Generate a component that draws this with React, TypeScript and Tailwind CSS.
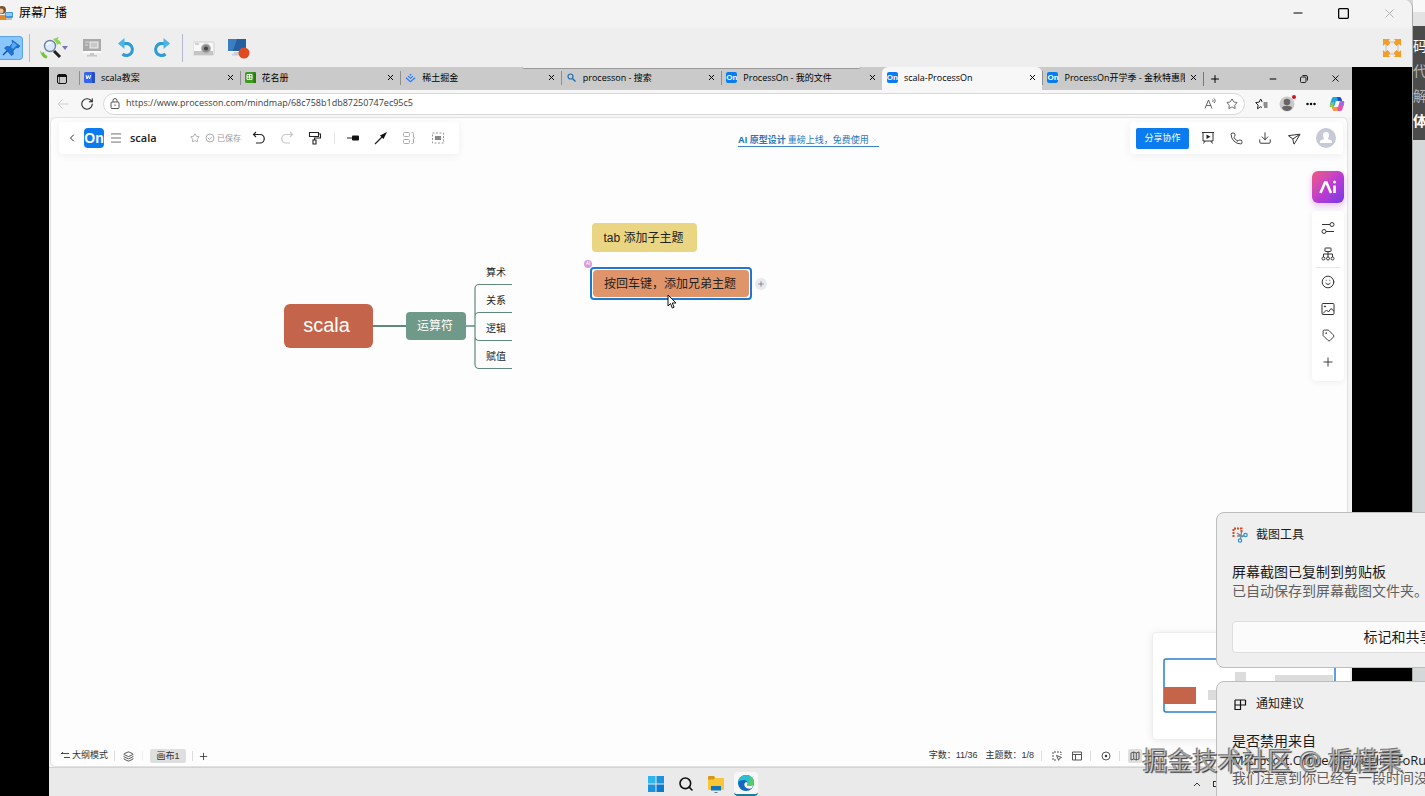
import type { ReactNode } from "react";
import {
  ChevronLeft,
  Download,
  Ellipsis,
  Layers,
  Menu,
  Minus,
  Phone,
  Plus,
  RotateCw,
  Search,
  Send,
  Smile,
  Square,
  Star,
  Tag,
  X,
} from "lucide-react";

type TabItem = {
  title: string;
  icon: ReactNode;
  active?: boolean;
};

function OnLogo({ large }: { large?: boolean }) {
  return large ? (
    <span className="flex h-5 w-5 shrink-0 items-center justify-center rounded bg-[#0a7cf0] font-['Liberation_Sans',sans-serif] text-sm font-bold text-white">
      On
    </span>
  ) : (
    <span className="flex h-[11px] w-[11px] shrink-0 items-center justify-center rounded-xs bg-[#0a7cf0] font-['Liberation_Sans',sans-serif] text-[8px] leading-[11px] font-bold text-white">
      On
    </span>
  );
}

function WordIcon() {
  return (
    <svg viewBox="0 0 11 11" className="h-[11px] w-[11px] shrink-0">
      <rect width="11" height="11" rx="1.5" fill="#3566ea" />
      <path d="M8 0h1.500a1.500 1.500 0 0 1 1.500 1.500V11H8z" fill="#234fc8" />
      <path d="M2 3l1 4 1.300-3.500L5.600 7l1-4" fill="none" stroke="#fff" strokeWidth="1" />
    </svg>
  );
}

function SheetIcon() {
  return (
    <svg viewBox="0 0 11 11" className="h-[11px] w-[11px] shrink-0">
      <rect width="11" height="11" rx="1.5" fill="#3e9b1e" />
      <path d="M8.500 0H9.500A1.500 1.500 0 0 1 11 1.500V11H8.500z" fill="#2b7a12" />
      <path d="M2 2.500h5v5H2zM4.500 2.500v5M2 5h5" fill="none" stroke="#fff" />
    </svg>
  );
}

function JuejinIcon() {
  return (
    <svg viewBox="0 0 12 12" className="h-[11px] w-[11px] shrink-0" fill="none" stroke="#2f7df0" strokeWidth="1.300">
      <path d="M6 2l1.300 1.100L6 4.200 4.700 3.100z" fill="#2f7df0" stroke="none" />
      <path d="M3.300 4.500L6 6.700l2.700-2.200M1 6.300l5 4.200 5-4.200" />
    </svg>
  );
}

function SearchIcon() {
  return (
    <svg viewBox="0 0 11 11" className="h-[11px] w-[11px] shrink-0" fill="none" stroke="#1f6fb5">
      <circle cx="4.500" cy="4.500" r="2.500" strokeWidth="1.200" />
      <path d="M6.500 6.500l3 3" strokeWidth="1.500" />
    </svg>
  );
}

const tabs: TabItem[] = [
  { title: "scala教案", icon: <WordIcon /> },
  { title: "花名册", icon: <SheetIcon /> },
  { title: "稀土掘金", icon: <JuejinIcon /> },
  { title: "processon - 搜索", icon: <SearchIcon /> },
  { title: "ProcessOn - 我的文件", icon: <OnLogo /> },
  { title: "scala-ProcessOn", icon: <OnLogo />, active: true },
  { title: "ProcessOn开学季 - 金秋特惠限时", icon: <OnLogo /> },
];

function TitleBar() {
  return (
    <header className="flex h-7 shrink-0 items-center bg-[#f3f3f3] pb-0.5">
      <svg viewBox="0 0 14 16" className="h-4 w-[14px]">
        <circle cx="2" cy="5" r="4" fill="#7c5130" />
        <circle cx="1" cy="6" r="2.500" fill="#e9c39a" />
        <path d="M0 10h5l2 5H0z" fill="#e08a2c" />
        <rect x="5" y="7" width="8" height="6" rx="1" fill="#3e96dc" />
        <rect x="6" y="8" width="6" height="3" fill="#8fcaf4" />
        <path d="M7 14h5" stroke="#7e8c98" />
      </svg>
      <h1 className="ml-[5px] flex-1 text-xs text-black">屏幕广播</h1>
      <div className="flex items-center gap-8 pr-[15px]">
        <button aria-label="最小化">
          <Minus className="h-[14px] w-[14px]" strokeWidth={1.8} />
        </button>
        <button aria-label="最大化">
          <Square className="h-[13px] w-[13px]" strokeWidth={2.4} />
        </button>
        <button aria-label="关闭" className="text-[#b5b5b5]">
          <X className="h-[15px] w-[15px]" strokeWidth={1.6} />
        </button>
      </div>
    </header>
  );
}

function Toolbar() {
  return (
    <div className="relative flex h-[39px] shrink-0 items-center bg-[#eeeeee]">
      <button aria-label="固定" className="h-6 w-[23px] rounded-r border border-l-0 border-[#5aa5e8] bg-[#8ac6fb]">
        <svg viewBox="0 0 22 22" className="h-[22px] w-[22px]">
          <path d="M3 18l6-6" stroke="#164f93" strokeWidth="1.500" />
          <path d="M12 3l8 6-2 2-2-.500-3 3.500.500 3-2 1.500-7-7.500 2-1.500 3 .300 3-3.500z" fill="#1e73d6" stroke="#0f55a8" strokeWidth=".600" />
          <path d="M13 5l4 3-4 4-2-2z" fill="#5aa9f4" />
        </svg>
      </button>
      <span className="ml-1.5 h-7 w-px bg-[#b5b9d8]" />
      <button aria-label="缩放" className="ml-2.5 flex items-center">
        <svg viewBox="0 0 22 22" className="h-[22px] w-[22px]">
          <path d="M0 14c1 0 1.500 1 1.500 2L4 15c0 2 1.500 3 3.500 4l-1 2.500C3 21 1 18 0 14z" fill="#74c43c" />
          <path d="M13 2l6-2-1.500 2.500C20 4 21 5 21 8l-2-1.500L17 8c0-2-1-3-4-6z" fill="#8bd24e" />
          <path d="M14 14l6 6" stroke="#222" strokeWidth="3" />
          <circle cx="10" cy="9" r="5.500" fill="#dbeafa" stroke="#71839f" strokeWidth="1.400" />
          <path d="M7 8a3 3 0 0 1 4-2" fill="none" stroke="#fff" strokeWidth="1.200" />
        </svg>
        <svg viewBox="0 0 6 4" className="h-1 w-1.5">
          <path d="M0 0h6L3 4z" fill="#7779b8" />
        </svg>
      </button>
      <button aria-label="屏幕" className="ml-[14px]">
        <svg viewBox="0 0 20 20" className="h-5 w-5">
          <rect x="1" y="1" width="18" height="12" fill="#a9a9a9" />
          <rect x="8" y="4" width="8" height="6" fill="#c9c9c9" stroke="#efefef" />
          <path d="M3 4h4M3 7h3" stroke="#dcdcdc" />
          <path d="M1 14h18" stroke="#fff" strokeWidth="1.500" />
          <path d="M8 15h4v2h3v1.500H5V17h3z" fill="#c6c6c6" />
        </svg>
      </button>
      <button aria-label="撤销" className="ml-[15px]">
        <svg viewBox="0 0 20 20" className="h-5 w-5" fill="none">
          <path d="M5 5.500h5a6 6 0 1 1-4.500 10.500" stroke="#2e9bd6" strokeWidth="3" />
          <path d="M7.500 0v11L1 5.500z" fill="#4db5e6" />
        </svg>
      </button>
      <button aria-label="重做" className="ml-[14px]">
        <svg viewBox="0 0 20 20" className="h-5 w-5" fill="none">
          <path d="M15 5.500h-5a6 6 0 1 0 4.500 10.500" stroke="#2e9bd6" strokeWidth="3" />
          <path d="M12.500 0v11L19 5.500z" fill="#4db5e6" />
        </svg>
      </button>
      <span className="ml-[11px] h-7 w-px bg-[#b5b9d8]" />
      <button aria-label="截图" className="ml-2.5">
        <svg viewBox="0 0 22 18" className="h-[18px] w-[22px]">
          <rect y="3" width="21" height="13" rx="1" fill="#f8f8f8" stroke="#cfcfcf" />
          <path d="M1 12h19v4H1z" fill="#c4c4c4" />
          <rect x="2" y="4" width="4" height="2" fill="#d0d0d0" />
          <circle cx="13" cy="9.500" r="4.500" fill="#8e8e8e" stroke="#bbb" />
          <circle cx="13" cy="9.500" r="2" fill="#3f464c" />
        </svg>
      </button>
      <button aria-label="录制" className="ml-3">
        <svg viewBox="0 0 24 22" className="h-[22px] w-6">
          <rect x="1" y="2" width="18" height="12" fill="#245f9f" />
          <path d="M1 2h9L6 14H1z" fill="#3a7ec2" />
          <path d="M1 14.500h18" stroke="#fff" />
          <path d="M7 15h5v2h3v1.500H5V17h2z" fill="#c9d0d6" />
          <circle cx="17" cy="16" r="5.500" fill="#e04a22" />
        </svg>
      </button>
      <div className="flex-1" />
      <button aria-label="全屏" className="mr-[11px]">
        <svg viewBox="0 0 18 18" className="h-[18px] w-[18px]">
          <path d="M5 3h8M5 15h8M3 5v8M15 5v8" stroke="#b9c4cb" />
          <path d="M0 0h7L5.500 2l2 2-3 3-2.500-2L0 7zM18 0h-7l1.500 2-2 2 3 3L16 5l2 2zM0 18h7l-1.500-2 2-2-3-3L2 13l-2-2zM18 18h-7l1.500-2-2-2 3-3 2.500 2 2-2z" fill="#f59d22" />
        </svg>
      </button>
      {/* Edge of the auto-hidden broadcast panel */}
      <span className="absolute -bottom-0.5 left-[37%] h-[3px] w-[24%] rounded-b border-b border-[#999] bg-[#eeeeee]" />
    </div>
  );
}

function TabStrip() {
  return (
    <div className="flex h-[23px] shrink-0 items-center bg-[#c9cac9]">
      <button aria-label="标签页操作" className="flex w-[30px] shrink-0 justify-center pr-1">
        <svg viewBox="0 0 12 12" className="h-3 w-3" fill="none" stroke="#111">
          <rect x="1.500" y="1.500" width="9" height="9" rx="1.500" />
          <path d="M1.500 3h9" strokeWidth="2" />
          <path d="M3.500 3v7.500" strokeWidth=".600" />
        </svg>
      </button>
      <nav className="flex h-full min-w-0 flex-1">
        {tabs.map((tab) => (
          <div
            key={tab.title}
            className={
              tab.active
                ? "flex min-w-0 flex-1 items-center rounded-t-md bg-[#f7f7f7] pr-[5px] pb-0.5"
                : "flex min-w-0 flex-1 items-center pr-[5px] pb-0.5"
            }
          >
            <span className={tab.active ? "mr-1 w-px shrink-0" : "mr-1 h-3.5 w-px shrink-0 bg-[#8f8f8f]"} />
            {tab.icon}
            <a href="#" className="mr-1 ml-1.5 min-w-0 flex-1 overflow-hidden text-[9px] leading-4 whitespace-nowrap text-black">
              {tab.title}
            </a>
            <button aria-label="关闭标签页">
              <X className="h-[9px] w-[9px]" strokeWidth={2.6} />
            </button>
          </div>
        ))}
      </nav>
      <div className="flex w-[149px] shrink-0 items-center">
        <span className="h-3.5 w-px bg-[#777]" />
        <button aria-label="新标签页" className="ml-[5px]">
          <Plus className="h-3 w-3" strokeWidth={2} />
        </button>
        <div className="flex flex-1 items-center justify-end gap-[21px] pr-[11px]">
          <button aria-label="最小化窗口">
            <Minus className="h-2.5 w-2.5" strokeWidth={2.4} />
          </button>
          <button aria-label="还原窗口">
            <svg viewBox="0 0 10 10" className="h-2.5 w-2.5" fill="none" stroke="#222">
              <rect x="1.500" y="3" width="5.500" height="5.500" rx="1" />
              <path d="M3.500 1.500h3.500a1.500 1.500 0 0 1 1.500 1.500v3.500" />
            </svg>
          </button>
          <button aria-label="关闭窗口">
            <X className="h-[11px] w-[11px]" strokeWidth={2} />
          </button>
        </div>
      </div>
    </div>
  );
}

function AddressBar() {
  return (
    <div className="flex h-[27px] shrink-0 items-center bg-[#f7f7f7] pr-[7px] pl-2">
      <button aria-label="后退" className="text-[#cfcfcf]">
        <svg viewBox="0 0 12 12" className="h-3 w-3" fill="none" stroke="currentColor">
          <path d="M11.500 6H1M5.500 1.500L1 6l4.500 4.500" />
        </svg>
      </button>
      <button aria-label="刷新" className="ml-[11px]">
        <RotateCw className="h-3.5 w-3.5 text-[#222]" strokeWidth={1.8} />
      </button>
      <div className="ml-[9px] flex h-[22px] min-w-0 flex-1 items-center rounded-full border border-[#d9d9d9] bg-white px-1.5">
        <svg viewBox="0 0 10 12" className="h-3 w-2.5" fill="none" stroke="#555">
          <rect x="1" y="4" width="8" height="6.500" rx="1" />
          <path d="M3 4V2.500a2 2 0 0 1 4 0V4M5 6.500v1.500" />
        </svg>
        <label htmlFor="address" className="sr-only">
          地址
        </label>
        <input
          id="address"
          defaultValue="https://www.processon.com/mindmap/68c758b1db87250747ec95c5"
          className="ml-1.5 h-5 min-w-0 flex-1 bg-transparent pb-0.5 text-[9px] text-[#3c3c3c] outline-none"
        />
        <button aria-label="朗读此页" className="text-[#555]">
          <svg viewBox="0 0 13 12" className="h-3 w-[13px]" fill="none" stroke="currentColor">
            <path d="M1 10.500L4.500 2 8 10.500M2.200 7.500h4.600M8.500 1.500c.800.700.800 1.800 0 2.500M10 .500c1.500 1.500 1.500 3 0 4.500" strokeWidth=".900" />
          </svg>
        </button>
        <button aria-label="收藏" className="ml-[9px] text-[#555]">
          <Star className="h-3 w-3" strokeWidth={1.8} />
        </button>
      </div>
      <button aria-label="收藏夹" className="ml-2.5">
        <svg viewBox="0 0 14 12" className="h-3 w-3.5" fill="none" stroke="#222">
          <path d="M7 9.500L5.500 8.700 2.500 10.800l.600-3.700L.700 4.600l3.500-.500L5.700 1l1.500 3M8.500 5h4M8.500 7h4M9 9h3.500" />
        </svg>
      </button>
      <button aria-label="个人资料" className="relative ml-2.5">
        <svg viewBox="0 0 16 16" className="h-4 w-4">
          <circle cx="8" cy="8" r="7.500" fill="#c9c9c9" />
          <circle cx="8" cy="6" r="3.300" fill="#666" />
          <path d="M3 12c0-3 10-3 10 0-2 4-8 4-10 0z" fill="#666" />
        </svg>
        <span className="absolute -top-px -right-px h-1 w-1 rounded-full bg-[#d3131d]" />
      </button>
      <button aria-label="更多" className="ml-2.5">
        <Ellipsis className="h-3 w-3" strokeWidth={3} />
      </button>
      <button aria-label="Copilot" className="ml-3">
        <svg viewBox="0 0 16 16" className="h-4 w-4">
          <path d="M5 1h5c2 0 2.500 2 3 4H7c-1 2-1 5-3 6H2C0 11 1 8 2 5s1-4 3-4z" fill="#24a4dc" />
          <path d="M8 1h2c2 0 2.500 2 3 4H9z" fill="#2349c5" />
          <path d="M2 7l3-1-1 5H2C0 11 1 9 2 7z" fill="#9ac839" />
          <path d="M11 15H6c-2 0-2.500-2-3-4h6c1-2 1-6 3-6h2c2 0 1 3 0 6s-1 4-3 4z" fill="#e653a4" />
          <path d="M12 5h2c2 0 1 3 .300 5H10z" fill="#a566e8" />
          <path d="M6 15c-2 0-2.500-2-3-4h5l1 4z" fill="#f69a3d" />
        </svg>
      </button>
    </div>
  );
}

function EditorHeader() {
  return (
    <div className="flex items-center pt-1 pr-1 pl-2">
      <div className="flex h-8 w-[400px] shrink-0 items-center rounded bg-white pl-[7px] text-[#333] shadow-[0_2px_8px_rgba(0,0,0,0.06)]">
        <button aria-label="返回">
          <ChevronLeft className="h-3 w-3" strokeWidth={2} />
        </button>
        <span className="ml-1.5">
          <OnLogo large />
        </span>
        <button aria-label="菜单" className="ml-[5px]">
          <Menu className="h-3.5 w-3.5" strokeWidth={1.2} />
        </button>
        <h2 className="ml-[7px] w-[60px] text-[11px] font-semibold text-[#222]">scala</h2>
        <Star className="h-2.5 w-2.5 text-[#999]" strokeWidth={1.8} />
        <svg viewBox="0 0 10 10" className="ml-[5px] h-2.5 w-2.5" fill="none" stroke="#a3a3a3">
          <circle cx="5" cy="5" r="4" strokeWidth=".900" />
          <path d="M3 5l1.500 1.500L7 3.800" strokeWidth=".900" />
        </svg>
        <span className="ml-0.5 text-[8px] text-[#999]">已保存</span>
        <button aria-label="撤销操作" className="ml-[11px]">
          <svg viewBox="0 0 14 14" className="h-3.5 w-3.5" fill="none" stroke="#222" strokeWidth="1.200">
            <path d="M4 1L1.500 3.500 4 6M1.500 3.500H8a4 4 0 0 1 0 8.500H4" />
          </svg>
        </button>
        <button aria-label="重做操作" className="ml-3.5">
          <svg viewBox="0 0 14 14" className="h-3.5 w-3.5" fill="none" stroke="#c7c7c7" strokeWidth="1.200">
            <path d="M10 1l2.500 2.500L10 6M12.500 3.500H6a4 4 0 0 0 0 8.500h4" />
          </svg>
        </button>
        <button aria-label="格式刷" className="ml-3.5">
          <svg viewBox="0 0 14 14" className="h-3.5 w-3.5" fill="none" stroke="#222" strokeWidth="1.100">
            <path d="M1.500 1.500h9v4h-9zM10.500 3h2v4H6.500v2" />
            <path d="M5 9h3v4H5z" />
          </svg>
        </button>
        <span className="ml-3 h-3 w-px bg-[#e5e5e5]" />
        <button aria-label="子主题" className="ml-3">
          <svg viewBox="0 0 12 12" className="h-3 w-3">
            <path d="M0 6h5" stroke="#222" />
            <rect x="5" y="3.500" width="7" height="5" rx="1" fill="#111" />
          </svg>
        </button>
        <button aria-label="关联线" className="ml-[15px]">
          <svg viewBox="0 0 14 14" className="h-3.5 w-3.5">
            <path d="M1 13L10 4" stroke="#222" strokeWidth="1.200" />
            <path d="M13 1L6 4.500 9.500 8z" fill="#111" />
          </svg>
        </button>
        <button aria-label="概要" className="ml-3.5">
          <svg viewBox="0 0 14 14" className="h-3.5 w-3.5" fill="none" stroke="#a8a8a8">
            <rect x="1.500" y="1.500" width="6" height="4" rx="1" />
            <rect x="1.500" y="8.500" width="6" height="4" rx="1" />
            <path d="M9.500 1.500h1a1 1 0 0 1 1 1V6l1 1-1 1v3.500a1 1 0 0 1-1 1h-1" />
          </svg>
        </button>
        <button aria-label="外框" className="ml-[15px]">
          <svg viewBox="0 0 14 14" className="h-3.5 w-3.5" fill="none" stroke="#999">
            <rect x="1.500" y="2" width="11" height="10" strokeDasharray="2 1.500" />
            <rect x="4" y="5" width="6" height="4" fill="#888" stroke="none" />
          </svg>
        </button>
      </div>

      <div className="flex flex-1 justify-center pl-7">
        <a href="#" className="mt-1 flex items-center border-b border-[#3b85c6] text-[9px] leading-3 text-[#2878bd]">
          <b className="mr-0.5 font-bold">AI 原型设计</b>
          重磅上线，免费使用
          <X className="ml-0.5 h-2 w-2 text-[#ddd]" />
        </a>
      </div>

      <div className="flex h-8 shrink-0 items-center rounded bg-white pr-[7px] pl-1.5 text-[#333] shadow-[0_2px_8px_rgba(0,0,0,0.06)]">
        <button className="h-[21px] w-[53px] rounded-xs bg-[#0a7cf0] text-[9px] text-white">分享协作</button>
        <button aria-label="演示" className="ml-3">
          <svg viewBox="0 0 14 14" className="h-3.5 w-3.5" fill="none" stroke="#333">
            <path d="M1 1.500h12M2 1.500h10v8.500H2zM4 10l-1.500 2.500M10 10l1.500 2.500" />
            <path d="M5.500 3.500l4 2.300-4 2.300z" fill="#222" stroke="none" />
          </svg>
        </button>
        <button aria-label="语音" className="ml-[15px]">
          <Phone className="h-[13px] w-[13px]" strokeWidth={1.7} />
        </button>
        <button aria-label="下载" className="ml-[15px]">
          <Download className="h-3.5 w-3.5" strokeWidth={1.6} />
        </button>
        <button aria-label="发送" className="ml-[15px]">
          <Send className="h-[13px] w-[13px] rotate-12" strokeWidth={1.7} />
        </button>
        <button aria-label="账户" className="ml-4">
          <svg viewBox="0 0 20 20" className="h-5 w-5">
            <circle cx="10" cy="10" r="10" fill="#c5cad6" />
            <path d="M10 4a3 3 0 0 1 3 3c0 2-1 2.500-1 4l4 1.800V15H4v-2.200L8 11c0-1.500-1-2-1-4a3 3 0 0 1 3-3z" fill="#fff" />
          </svg>
        </button>
      </div>
    </div>
  );
}

function SidePanel() {
  return (
    <aside className="mt-[17px] mr-[3px] flex flex-col items-center self-end">
      <button aria-label="AI" className="flex h-8 w-8 items-center justify-center rounded-md bg-linear-to-br from-[#f2557c] via-[#bf3bd0] to-[#7434e4] shadow-[0_3px_6px_rgba(190,70,230,0.35)]">
        <svg viewBox="0 0 18 14" className="h-3.5 w-[18px]" fill="none" stroke="#fff" strokeWidth="2.600">
          <path d="M1.500 13L6 2.500h1.500L12 13M15.500 5.500V13" />
          <circle cx="15.500" cy="2" r="1.500" fill="#fff" stroke="none" />
        </svg>
      </button>
      <div className="mt-2 flex w-8 flex-col items-center rounded bg-white pt-2.5 pb-3 text-[#333] shadow-[0_1px_6px_rgba(0,0,0,0.07)]">
        <button aria-label="样式">
          <svg viewBox="0 0 14 14" className="h-3.5 w-3.5" fill="none" stroke="currentColor">
            <path d="M1 3.500h8M5 10.500h8" />
            <circle cx="11" cy="3.500" r="2" />
            <circle cx="3" cy="10.500" r="2" />
          </svg>
        </button>
        <button aria-label="结构" className="mt-3">
          <svg viewBox="0 0 14 14" className="h-3.5 w-3.5" fill="none" stroke="currentColor">
            <rect x="4" y="1" width="6" height="3.500" rx=".500" />
            <path d="M7 4.500V10M2.500 10V7h9v3" />
            <circle cx="2.500" cy="11.500" r="1.500" />
            <circle cx="7" cy="11.500" r="1.500" />
            <circle cx="11.500" cy="11.500" r="1.500" />
          </svg>
        </button>
        <span className="mt-1.5 h-px w-6 bg-[#e8e8e8]" />
        <button aria-label="图标" className="mt-[7px]">
          <Smile className="h-3.5 w-3.5" strokeWidth={1.7} />
        </button>
        <button aria-label="图片" className="mt-[13px]">
          <svg viewBox="0 0 14 14" className="h-3.5 w-3.5" fill="none" stroke="currentColor">
            <rect x="1" y="1.500" width="12" height="11" rx="1" />
            <circle cx="4" cy="4.500" r=".600" fill="currentColor" />
            <path d="M2 11.500L5.500 8l2 2 2.500-3.500L13 9" />
          </svg>
        </button>
        <button aria-label="标签" className="mt-[13px]">
          <Tag className="h-[13px] w-[13px]" strokeWidth={1.7} />
        </button>
        <button aria-label="添加" className="mt-[13px]">
          <Plus className="h-3.5 w-3.5" strokeWidth={1.6} />
        </button>
      </div>
    </aside>
  );
}

function MindMap() {
  return (
    <div className="font-['Liberation_Sans','Noto_Sans_CJK_SC',sans-serif] text-[#1f1f1f]">
      <svg viewBox="0 0 240 110" className="absolute top-[159px] left-[319px] h-[110px] w-[240px]" fill="none" stroke="#5f8a7b">
        <path d="M0 49h37" strokeWidth="2" />
        <path d="M96 49h9" strokeWidth="1.500" />
        <path d="M142 7.500h-33a4 4 0 0 0-4 4v76a4 4 0 0 0 4 4h33M142 35.500h-33a4 4 0 0 0-4 4v20a4 4 0 0 0 4 4h33" strokeWidth="1.200" />
      </svg>
      <div className="absolute top-[186px] left-[233px] flex h-[44px] w-[89px] items-center justify-center rounded-md bg-[#c4644a] pr-1 pb-0.5 text-xl text-white">
        scala
      </div>
      <div className="absolute top-[194px] left-[355px] flex h-[28px] w-[60px] items-center justify-center rounded bg-[#6f9a8a] pr-0.5 text-xs text-white">
        运算符
      </div>
      <ul className="absolute top-[141px] left-[435px] text-[10px] leading-7">
        <li>算术</li>
        <li>关系</li>
        <li>逻辑</li>
        <li>赋值</li>
      </ul>
      <div className="absolute top-[105px] left-[541px] flex h-[29px] w-[105px] items-center justify-center rounded bg-[#ead582] pr-0.5 text-xs">
        tab 添加子主题
      </div>
      <div className="absolute top-[149px] left-[539px] h-[33px] w-[162px] rounded border-2 border-[#1f78cf] bg-white p-px">
        <div className="flex h-full items-center justify-center rounded bg-[#e0946a] pr-0.5 text-xs">按回车键，添加兄弟主题</div>
      </div>
      <span className="absolute top-[142px] left-[533px] flex h-2 w-2 items-center justify-center rounded-full bg-[#d69bda] text-[5px] text-white">
        AI
      </span>
      <button aria-label="添加主题" className="absolute top-[160px] left-[704px] flex h-3 w-3 items-center justify-center rounded-full bg-[#e8eaec] text-[#777]">
        <Plus className="h-2 w-2" strokeWidth={2.4} />
      </button>
      <svg viewBox="0 0 10 16" className="absolute top-[176px] left-[616px] h-4 w-2.5">
        <path d="M1 1v11l2.500-2.500L5.300 14l1.800-.800L5.300 9H9z" fill="#fff" stroke="#111" />
      </svg>
    </div>
  );
}

function MiniMap() {
  return (
    <div className="absolute -right-1 bottom-[26px] h-[108px] w-[199px] rounded border border-[#eee] bg-white px-2.5 pt-[25px] shadow-[0_1px_8px_rgba(0,0,0,0.08)]">
      <svg viewBox="0 0 173 55" className="h-[55px] w-[173px]">
        <rect x="1" y="1" width="171" height="53" rx="2" fill="none" stroke="#2a7fd0" strokeWidth="1.500" />
        <rect x="1" y="29" width="32" height="17" fill="#c4644a" />
        <path d="M45 32h14v10H45zM72 14h11v10H72zM112 17h58v8h-58zM112 8h39v2h-39z" fill="#dcdcdc" />
      </svg>
    </div>
  );
}

function StatusBar() {
  return (
    <footer className="absolute inset-x-0 bottom-0 flex h-5 items-center pr-1 pl-2.5 font-['Liberation_Sans','Noto_Sans_CJK_SC',sans-serif] text-[9px] text-[#333]">
      <button className="flex items-center gap-0.5">
        <svg viewBox="0 0 9 8" className="h-2 w-[9px]" fill="none" stroke="#333">
          <path d="M0 1.500h8M3 5.500h6M2 0L.500 1.500" strokeWidth=".900" />
        </svg>
        大纲模式
      </button>
      <span className="ml-1.5 h-2.5 w-px bg-[#ddd]" />
      <button aria-label="图层" className="ml-2">
        <Layers className="h-[11px] w-[11px]" strokeWidth={1.8} />
      </button>
      <span className="ml-2 h-2.5 w-px bg-[#eee]" />
      <button className="ml-[7px] h-[14px] w-9 rounded-xs bg-[#dfdfdf] text-[9px] leading-[14px]">画布1</button>
      <span className="ml-1.5 h-2.5 w-px bg-[#ddd]" />
      <button aria-label="新建画布" className="ml-[5px]">
        <Plus className="h-[11px] w-[11px]" strokeWidth={1.8} />
      </button>
      <div className="flex flex-1 items-center justify-end pr-[201px]">
        <span>字数：11/36</span>
        <span className="ml-2">主题数：1/8</span>
        <span className="ml-[7px] h-2.5 w-px bg-[#ddd]" />
        <button aria-label="框选" className="ml-2.5">
          <svg viewBox="0 0 10 10" className="h-2.5 w-2.5" fill="none" stroke="#555">
            <path d="M4 9H1V1h8v3" strokeDasharray="2 1" />
            <path d="M4.500 4.500l5 2-2 .800-.800 2z" />
          </svg>
        </button>
        <button aria-label="布局" className="ml-2.5">
          <svg viewBox="0 0 10 10" className="h-2.5 w-2.5" fill="none" stroke="#555">
            <path d="M.500 1h9v8h-9zM.500 3.500h9M3.500 3.500V9" />
          </svg>
        </button>
        <span className="ml-2 h-2.5 w-px bg-[#ddd]" />
        <button aria-label="定位" className="ml-2.5">
          <svg viewBox="0 0 10 10" className="h-2.5 w-2.5" fill="none" stroke="#444">
            <circle cx="5" cy="5" r="4" strokeWidth=".900" />
            <circle cx="5" cy="5" r="1.200" fill="#333" stroke="none" />
          </svg>
        </button>
        <span className="ml-2 h-2.5 w-px bg-[#ddd]" />
        <button aria-label="导航地图" className="ml-2 flex h-3.5 w-3.5 items-center justify-center rounded-xs bg-[#dedede]">
          <svg viewBox="0 0 10 10" className="h-2.5 w-2.5" fill="none" stroke="#555">
            <path d="M1 2l2.700-1 2.600 1L9 1v7L6.300 9 3.700 8 1 9zM3.700 1v7M6.300 2v7" />
          </svg>
        </button>
      </div>
    </footer>
  );
}

function Taskbar() {
  return (
    <nav className="relative flex h-[29px] shrink-0 items-center justify-center border-t border-[#d2d2d2] bg-[#eaeaea] pt-1 pl-[5px]">
      <button aria-label="开始">
        <svg viewBox="0 0 16 16" className="h-4 w-4">
          <path d="M0 0h7.500v7.500H0z" fill="#2fb4ee" />
          <path d="M8.500 0H16v7.500H8.500zM0 8.500h7.500V16H0z" fill="#1b93de" />
          <path d="M8.500 8.500H16V16H8.500z" fill="#0b7bd0" />
        </svg>
      </button>
      <button aria-label="搜索" className="ml-3.5">
        <Search className="h-4 w-4 text-[#111]" strokeWidth={2.4} />
      </button>
      <button aria-label="文件资源管理器" className="ml-3.5">
        <svg viewBox="0 0 16 18" className="h-[18px] w-4">
          <path d="M0 2.500C0 1.500.500 1 1.500 1H6l1.500 2H15c.600 0 1 .400 1 1v11H0z" fill="#f9c637" />
          <path d="M0 2.500C0 1.500.500 1 1.500 1H6l1 2-1.500 1.500H0z" fill="#d99516" />
          <path d="M3 11h10v4.500H3z" fill="#1276b8" />
          <path d="M6.500 17.500h3" stroke="#777" />
        </svg>
      </button>
      <button aria-label="Edge" className="ml-2.5 flex h-6 w-6 items-center justify-center rounded border-b-2 border-[#1e7c9c] bg-[#f7f7f7]">
        <svg viewBox="0 0 18 18" className="h-[18px] w-[18px]">
          <circle cx="9" cy="9" r="8" fill="#1269bd" />
          <path d="M1 8C1.500 4 5 1 9 1c5 0 8 3.500 8 7 0 3-2.500 4-5 4-1.500 0-2.500-.500-2-1.500C11.500 7.500 9 6 6.500 6 4 6 2 7 1 8z" fill="#2cbfd2" />
          <path d="M12 1.700C15 3 17 5.500 17 8c0 3-2.500 4-5 4-1.500 0-2.500-.500-2-1.500 2-1 3.500-5 2-8.800z" fill="#58cb62" />
          <path d="M10 10.500c-.500 1 .500 1.500 2 1.500 2 0 3.500-.500 4.300-1.600L15 14c-4 2-8.500-.500-7.500-4.500C8 8.500 9.500 8 10.300 8.500c.400.600.200 1.300-.300 2z" fill="#f7f7f7" />
        </svg>
      </button>
      <div className="absolute right-[131px] bottom-2 flex items-center gap-3 text-[#333]">
        <svg viewBox="0 0 8 8" className="h-2 w-2" fill="none" stroke="currentColor">
          <path d="M1 6l3-3 3 3" />
        </svg>
        <span className="h-1.5 w-2 border border-[#333]" />
      </div>
    </nav>
  );
}

function Notifications() {
  return (
    <div className="absolute top-[512px] right-[-164px] flex w-[373px] flex-col gap-[13px] text-[#1b1b1b]">
      <section className="h-[156px] rounded-lg border border-[#bdbdbd] bg-[#efefef] px-[15px] pt-3">
        <h3 className="flex h-5 items-center gap-2 text-xs">
          <svg viewBox="0 0 16 16" className="h-4 w-4" fill="none">
            <path d="M1.500 10V1.500h8V6" stroke="#cd4a25" strokeWidth="2" strokeDasharray="2 1" />
            <path d="M5 6l6 4M12.500 9H5M9.500 5l-1 7" stroke="#7b8791" strokeWidth="1.300" />
            <circle cx="13.500" cy="8" r="1.700" stroke="#2695dc" strokeWidth="1.200" />
            <circle cx="8" cy="13.500" r="1.700" stroke="#2695dc" strokeWidth="1.200" />
          </svg>
          截图工具
        </h3>
        <p className="mt-[17px] text-sm leading-5 whitespace-nowrap">屏幕截图已复制到剪贴板</p>
        <p className="text-sm leading-[18px] whitespace-nowrap text-[#5f5f5f]">已自动保存到屏幕截图文件夹。</p>
        <button className="mt-[21px] h-8 w-full rounded border border-[#dedede] bg-[#fbfbfb] pr-2 text-sm">
          标记和共享
        </button>
      </section>
      <section className="h-[200px] rounded-lg border border-[#bdbdbd] bg-[#efefef] px-[15px] pt-3">
        <h3 className="flex h-5 items-center gap-2 text-xs">
          <svg viewBox="0 0 16 16" className="h-4 w-4" fill="none" stroke="#111" strokeWidth="1.200">
            <path d="M3 4h10.500M3 4v9.500h5.500V4M3 9h10.500V4" />
          </svg>
          通知建议
        </h3>
        <p className="mt-[17px] text-sm leading-5">是否禁用来自</p>
        <p className="text-[13px] leading-[18px] whitespace-nowrap">Microsoft.Office.OfficeClickToRun</p>
        <p className="text-sm leading-[18px] whitespace-nowrap text-[#5f5f5f]">我们注意到你已经有一段时间没有</p>
      </section>
    </div>
  );
}

export default function App() {
  return (
    <div className="relative flex h-screen overflow-hidden bg-[#d5d8d9] font-['Open_Sans','Noto_Sans_CJK_SC',sans-serif]">
      <main className="flex min-w-0 flex-1 flex-col overflow-hidden rounded-tr-lg border-r border-[#aaa]">
        <TitleBar />
        <Toolbar />
        <div className="flex min-h-0 flex-1 bg-black pr-[60px] pl-[49px]">
          <div className="flex min-w-0 flex-1 flex-col bg-[#f3f3f3]">
            <TabStrip />
            <AddressBar />
            <div className="relative mr-1 ml-px flex min-h-0 flex-1 flex-col rounded-md border border-[#e2e2e2] bg-[#fdfdfd]">
              <EditorHeader />
              <MindMap />
              <SidePanel />
              <MiniMap />
              <StatusBar />
            </div>
            <Taskbar />
          </div>
        </div>
      </main>

      {/* Window behind, cut off by the screen edge */}
      <aside className="w-3 shrink-0 overflow-hidden">
        <div className="h-3 bg-[#f8f8f8]" />
        <div className="h-3.5 bg-[#e3e3e3]" />
        <div className="flex h-[114px] flex-col gap-[5px] bg-[#4b4b4b] pt-2.5 text-sm leading-5 text-[#b5b5b5]">
          <span className="w-5 text-white">码</span>
          <span className="w-5">代</span>
          <span className="w-5">解</span>
          <b className="w-5 text-white">体</b>
        </div>
      </aside>

      <Notifications />
      <p className="pointer-events-none absolute right-[22px] bottom-[18px] text-[25px] leading-9 whitespace-nowrap text-white/50 [text-shadow:1px_1px_1px_#333,-1px_-1px_0_#777]">
        掘金技术社区 @ 栀槿秉
      </p>
    </div>
  );
}
